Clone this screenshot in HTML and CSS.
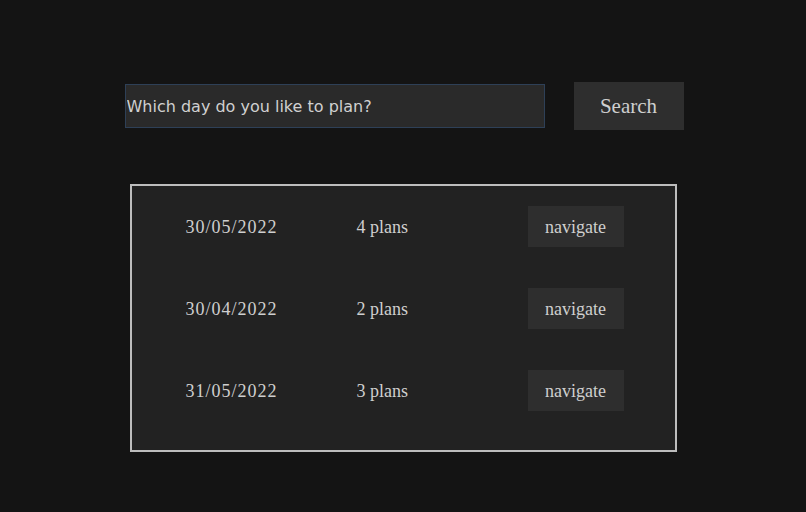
FILE: index.html
```html
<!DOCTYPE html>
<html lang="en">
<head>
    <meta charset="UTF-8">
    <meta name="viewport" content="width=device-width, initial-scale=1.0">
    <title>Day Planner</title>
    <link rel="stylesheet" href="styles.css">
</head>
<body>
    <!-- Search bar -->
    <div class="search-bar">
        <input type="text" class="search-input" value="Which day do you like to plan?">
        <button class="search-button">Search</button>
    </div>

    <!-- Days list -->
    <div class="day-list">
        <div class="day-row">
            <span class="day-date">30/05/2022</span>
            <span class="day-count">4 plans</span>
            <button class="nav-button">navigate</button>
        </div>
        <div class="day-row">
            <span class="day-date">30/04/2022</span>
            <span class="day-count">2 plans</span>
            <button class="nav-button">navigate</button>
        </div>
        <div class="day-row">
            <span class="day-date">31/05/2022</span>
            <span class="day-count">3 plans</span>
            <button class="nav-button">navigate</button>
        </div>
    </div>
</body>
</html>
```

FILE: styles.css
```css
/* Page */
body {
    margin: 0;
    background-color: #141414;
    color: #cfcfcf;
    font-family: "Liberation Serif", serif;
}

/* Search bar */
.search-bar {
    display: flex;
    justify-content: center;
    align-items: center;
    gap: 29px;
    padding: 82px 0 0 2px;
}

.search-input {
    box-sizing: border-box;
    width: 420px;
    height: 44px;
    margin: 0;
    padding: 0 0 0 1px;
    background-color: #2a2a2a;
    border: 1px solid #2e4057;
    color: #d0d0d0;
    font-family: "DejaVu Sans", sans-serif;
    font-size: 16px;
    outline: none;
}

.search-button {
    width: 110px;
    height: 48px;
    background-color: #2e2e2e;
    color: #cfcfcf;
    border: none;
    font-family: "Liberation Serif", serif;
    font-size: 21px;
    cursor: pointer;
}

/* Days list */
.day-list {
    box-sizing: border-box;
    width: 547px;
    margin: 54px auto 0;
    padding: 20px 0 39px 54px;
    background-color: #222;
    border: 2px solid #bdbdbd;
    display: flex;
    flex-direction: column;
    gap: 41px;
}

.day-row {
    display: grid;
    grid-template-columns: 171px 171px 96px;
    align-items: center;
    font-size: 18px;
}

.day-date,
.day-count {
    padding-top: 2px;
}

.day-date {
    letter-spacing: 1px;
}

.nav-button {
    height: 41px;
    padding-top: 2px;
    background-color: #2e2e2e;
    color: #cfcfcf;
    border: none;
    font-family: "Liberation Serif", serif;
    font-size: 18px;
    cursor: pointer;
}
```
